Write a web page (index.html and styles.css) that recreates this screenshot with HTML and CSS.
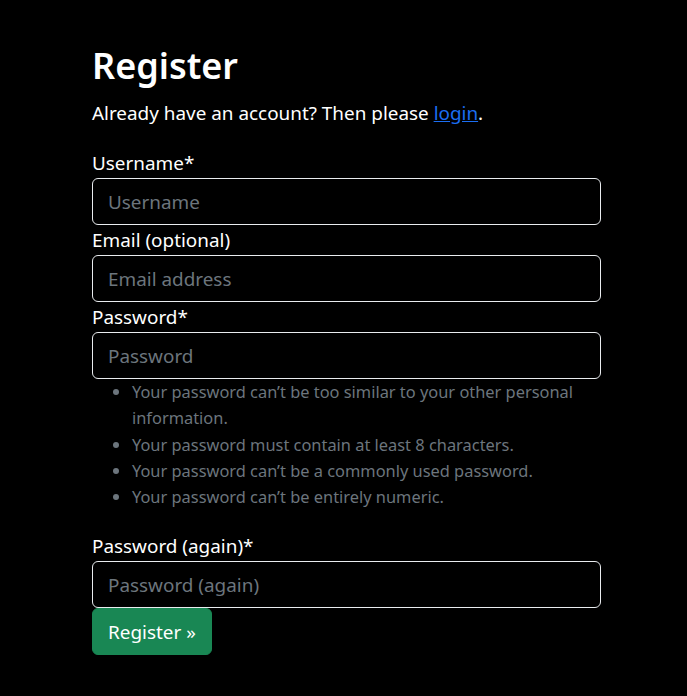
FILE: index.html
```html
<!DOCTYPE html>
<html lang="en">
<head>
<meta charset="utf-8">
<title>Register</title>
<link rel="stylesheet" href="styles.css">
</head>
<body>
<main class="page">
  <h1 class="title">Register</h1>
  <p class="lead-text">Already have an account? Then please <a href="#" class="link">login</a>.</p>
  <form class="form">
    <label class="label" for="username">Username*</label>
    <input class="control" id="username" type="text" placeholder="Username">
    <label class="label" for="email">Email (optional)</label>
    <input class="control" id="email" type="email" placeholder="Email address">
    <label class="label" for="pw1">Password*</label>
    <input class="control" id="pw1" type="password" placeholder="Password">
    <ul class="help">
      <li>Your password can’t be too similar to your other personal information.</li>
      <li>Your password must contain at least 8 characters.</li>
      <li>Your password can’t be a commonly used password.</li>
      <li>Your password can’t be entirely numeric.</li>
    </ul>
    <label class="label" for="pw2">Password (again)*</label>
    <input class="control" id="pw2" type="password" placeholder="Password (again)">
    <div class="actions"><button class="btn" type="button">Register »</button></div>
  </form>
</main>
</body>
</html>
```
FILE: styles.css
```css
html, body {
  margin: 0;
  padding: 0;
  background: #000;
}
body {
  font-family: "Noto Sans", "Open Sans", sans-serif;
  font-size: 18.9px;
  line-height: 30px;
  color: #fff;
}
.page {
  width: 509px;
  margin-left: 92px;
  padding-top: 43px;
}
.title {
  margin: 0 0 10px;
  font-size: 36px;
  line-height: 45px;
  font-weight: 600;
}
.lead-text {
  margin: 0 0 20px;
}
.link {
  color: #1b6ef3;
  text-decoration: underline;
}
.form {
  display: flex;
  flex-direction: column;
  align-items: stretch;
}
.label {
  display: block;
  line-height: 30px;
}
.control {
  display: block;
  box-sizing: border-box;
  width: 100%;
  height: 47px;
  margin: 0;
  padding: 7.5px 15px;
  font: inherit;
  color: #fff;
  background: #000;
  border: 1px solid #e9ecef;
  border-radius: 6px;
  outline: none;
}
.control::placeholder {
  color: #6c757d;
  opacity: 1;
}
.help {
  margin: 0 0 21px;
  padding-left: 40px;
  font-size: 16.4px;
  line-height: 26.25px;
  color: #6c757d;
}
.actions {
  display: flex;
}
.btn {
  box-sizing: border-box;
  height: 47px;
  padding: 7.5px 15px;
  font: inherit;
  color: #fff;
  background: #198754;
  border: 1px solid #198754;
  border-radius: 6px;
}
```
